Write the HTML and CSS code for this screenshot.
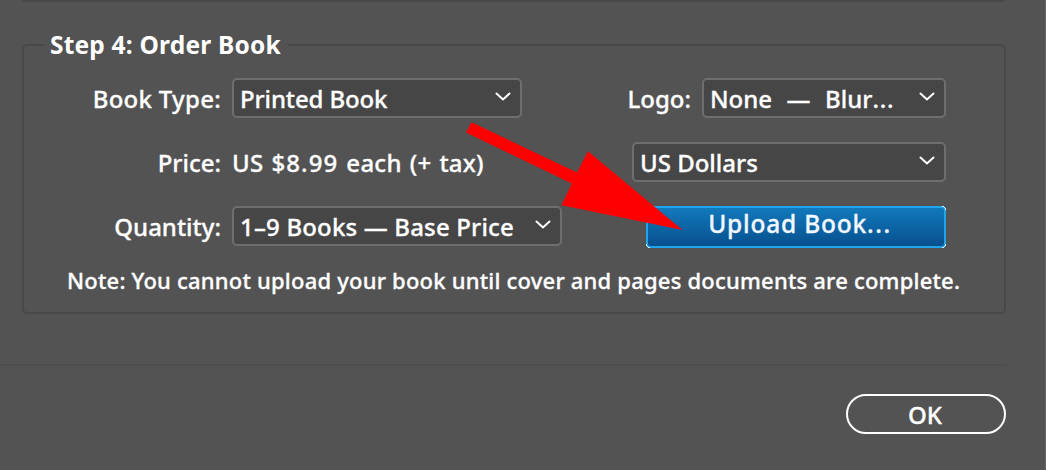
FILE: index.html
```html
<!DOCTYPE html>
<html lang="en">
<head>
<meta charset="utf-8">
<title>Order Book</title>
<link rel="stylesheet" href="styles.css">
</head>
<body>
<main class="dialog">
  <div class="previous"></div>
  <section class="group">
    <h2 class="legend">Step 4: Order Book</h2>
    <div class="row">
      <label class="label t-type">Book Type:</label>
      <div class="select type"><span>Printed Book</span><svg class="chevron" viewBox="0 0 16 10"><path d="M1.5 1.5 8 7.5 14.5 1.5"/></svg></div>
      <label class="label end">Logo:</label>
      <div class="select logo"><span>None&nbsp; —&nbsp; Blur<span class="dots">...</span></span><svg class="chevron" viewBox="0 0 16 10"><path d="M1.5 1.5 8 7.5 14.5 1.5"/></svg></div>
    </div>
    <div class="row">
      <label class="label">Price:</label>
      <div class="value">US <span class="amount">$8.99</span> each (+ tax)</div>
      <div class="select currency"><span>US Dollars</span><svg class="chevron" viewBox="0 0 16 10"><path d="M1.5 1.5 8 7.5 14.5 1.5"/></svg></div>
    </div>
    <div class="row">
      <label class="label">Quantity:</label>
      <div class="select quantity"><span>1–9 Books — Base Price</span><svg class="chevron" viewBox="0 0 16 10"><path d="M1.5 1.5 8 7.5 14.5 1.5"/></svg></div>
      <button class="upload"><span>Upload Book<span class="dots">...</span></span><svg class="corners" viewBox="0 0 300 42"><path d="M296 0h2v1h1v1h1v2h-1v-2h-1v-1h-2zM0 38h1v2h1v1h2v1h-2v-1h-1v-1h-1zM299 38h1v2h-1v1h-1v1h-2v-1h2v-1h1z"/></svg></button>
    </div>
    <p class="note">Note: You cannot upload your book until cover and pages documents are complete.</p>
  </section>
  <footer class="footer"><button class="ok">OK</button></footer>
  <svg class="arrow" viewBox="0 0 1046 470"><path d="M471.500 122.300 577 172.500 588 151.300 682.500 230 561.500 205.200 571.800 183.500 466 132.600Z"/></svg>
</main>
</body>
</html>
```
FILE: styles.css
```css
* { box-sizing: border-box; }
body { margin: 0; background: #535353; }
.dialog {
  position: relative;
  width: 1046px;
  height: 470px;
  overflow: hidden;
  background: #535353;
  border-right: 1px solid #686868;
  border-bottom-right-radius: 4px;
  color: #fff;
  font: 500 24px/36px "Noto Sans", "Open Sans", sans-serif;
  -webkit-text-stroke: 0.3px currentColor;
  white-space: nowrap;
}
.previous {
  height: 2px;
  margin: 0 40px 0 22px;
  background: #484848;
  border-radius: 0 0 3px 3px;
}
.group {
  width: 984px;
  height: 270px;
  margin: 42px 0 0 22px;
  border: 2px solid #484848;
  border-radius: 5px;
}
.legend {
  width: 244px;
  height: 36px;
  margin: -19px 0 15px 20px;
  padding-left: 6px;
  background: #535353;
  font-size: 24.5px;
  font-weight: 700;
  letter-spacing: 0.2px;
  -webkit-text-stroke: 0;
}
.row {
  display: flex;
  align-items: flex-start;
  height: 40px;
  margin: 0 58px 24px 0;
}
.label { width: 197px; padding-top: 3px; margin-right: 11px; text-align: right; }
.t-type { letter-spacing: 0.28px; }
.label.end { width: auto; margin-left: auto; }
.value { padding-top: 3px; letter-spacing: 0.25px; word-spacing: 1.5px; }
.amount { letter-spacing: 1.1px; }
.select {
  display: flex;
  align-items: center;
  justify-content: space-between;
  height: 40px;
  padding: 2px 9px 0 6px;
  background: #464646;
  border: 2px solid #6e6e6e;
  border-radius: 5px;
}
.type { width: 290px; letter-spacing: -0.12px; }
.logo { width: 244px; word-spacing: 1px; }
.dots { letter-spacing: 0.7px; }
.currency { width: 314px; margin-left: auto; }
.quantity { width: 330px; letter-spacing: 0.17px; }
.chevron {
  width: 16px;
  height: 10px;
  margin-bottom: 4px;
  fill: none;
  stroke: #fff;
  stroke-width: 2;
  stroke-linecap: round;
}
.upload {
  position: relative;
  width: 300px;
  height: 42px;
  margin-left: auto;
  padding: 0;
  border: 2px solid #20a5ed;
  border-radius: 4px;
  background: linear-gradient(#1179bb, #08508e);
  color: #f2f7ff;
  font: inherit;
  font-size: 24.5px;
  letter-spacing: 0.8px;
  line-height: 36px;
}
.upload > span { position: relative; left: 4px; top: -3px; }
.upload .dots { letter-spacing: 1.6px; }
.corners { position: absolute; top: -2px; left: -2px; width: 300px; height: 42px; fill: #d8f0ff; }
.note { margin: -8px 0 0 43px; font-size: 22px; line-height: 36px; letter-spacing: 0.205px; }
.footer {
  display: flex;
  justify-content: flex-end;
  width: 1006px;
  margin-top: 50px;
  padding-top: 28px;
  border-top: 2px solid #4e4e4e;
}
.ok {
  width: 160px;
  height: 40px;
  padding: 1px 2px 0 0;
  background: none;
  border: 2px solid #fff;
  border-radius: 20px;
  color: inherit;
  font: inherit;
  line-height: 32px;
}
.arrow { position: absolute; inset: 0; width: 1046px; height: 470px; fill: #f00; }
```
